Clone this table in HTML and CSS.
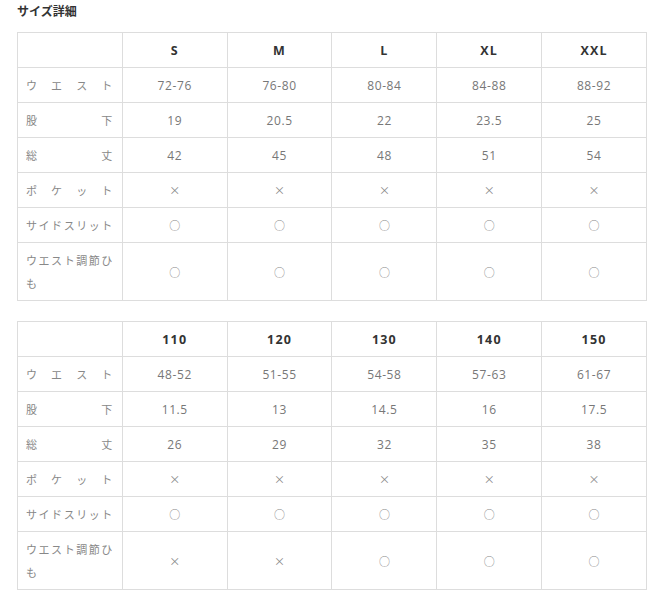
FILE: index.html
```html
<!DOCTYPE html>
<html lang="ja">
<head>
<meta charset="utf-8">
<link rel="stylesheet" href="styles.css">
</head>
<body>
<h2 class="title">サイズ詳細</h2>
<table class="size">
  <colgroup><col><col><col><col><col><col></colgroup>
  <tr class="head"><td></td><th>S</th><th>M</th><th>L</th><th>XL</th><th>XXL</th></tr>
  <tr><td class="lbl">ウ　エ　ス　ト</td><td>72-76</td><td>76-80</td><td>80-84</td><td>84-88</td><td>88-92</td></tr>
  <tr><td class="lbl">股　　下</td><td>19</td><td>20.5</td><td>22</td><td>23.5</td><td>25</td></tr>
  <tr><td class="lbl">総　　丈</td><td>42</td><td>45</td><td>48</td><td>51</td><td>54</td></tr>
  <tr><td class="lbl">ポ　ケ　ッ　ト</td><td class="sym">×</td><td class="sym">×</td><td class="sym">×</td><td class="sym">×</td><td class="sym">×</td></tr>
  <tr><td class="lbl">サイドスリット</td><td class="sym">○</td><td class="sym">○</td><td class="sym">○</td><td class="sym">○</td><td class="sym">○</td></tr>
  <tr><td class="lbl">ウエスト調節ひも</td><td class="sym">○</td><td class="sym">○</td><td class="sym">○</td><td class="sym">○</td><td class="sym">○</td></tr>
</table>
<table class="size second">
  <colgroup><col><col><col><col><col><col></colgroup>
  <tr class="head"><td></td><th>110</th><th>120</th><th>130</th><th>140</th><th>150</th></tr>
  <tr><td class="lbl">ウ　エ　ス　ト</td><td>48-52</td><td>51-55</td><td>54-58</td><td>57-63</td><td>61-67</td></tr>
  <tr><td class="lbl">股　　下</td><td>11.5</td><td>13</td><td>14.5</td><td>16</td><td>17.5</td></tr>
  <tr><td class="lbl">総　　丈</td><td>26</td><td>29</td><td>32</td><td>35</td><td>38</td></tr>
  <tr><td class="lbl">ポ　ケ　ッ　ト</td><td class="sym">×</td><td class="sym">×</td><td class="sym">×</td><td class="sym">×</td><td class="sym">×</td></tr>
  <tr><td class="lbl">サイドスリット</td><td class="sym">○</td><td class="sym">○</td><td class="sym">○</td><td class="sym">○</td><td class="sym">○</td></tr>
  <tr><td class="lbl">ウエスト調節ひも</td><td class="sym">×</td><td class="sym">×</td><td class="sym">○</td><td class="sym">○</td><td class="sym">○</td></tr>
</table>
</body>
</html>
```

FILE: styles.css
```css
html, body {
  margin: 0;
  padding: 0;
  background: #fff;
}
body {
  padding: 0 13px 0 17px;
  font-family: "Open Sans", "Noto Sans CJK JP", sans-serif;
  color: #777;
}
.title {
  margin: 3px 0 13px;
  font-size: 12px;
  line-height: 16px;
  font-weight: bold;
  color: #333;
  font-family: "Noto Sans CJK JP", sans-serif;
}
.size {
  width: 630px;
  table-layout: fixed;
  border-collapse: collapse;
}
.size.second {
  margin-top: 20px;
}
.size td, .size th {
  border: 1px solid #ddd;
  padding: 6px 8px 5px;
  line-height: 23px;
  text-align: center;
  font-size: 12px;
  letter-spacing: 0.6px;
  font-weight: normal;
  color: #777;
}
.size th {
  font-weight: bold;
  font-size: 12.5px;
  letter-spacing: 1.2px;
  color: #333;
}
.size td.lbl {
  font-family: "Noto Sans CJK JP", sans-serif;
  font-size: 11px;
  letter-spacing: 1.5px;
  color: #888;
  text-align: justify;
  text-align-last: justify;
  word-break: break-all;
}
.size td.sym {
  font-family: "Noto Sans CJK JP", sans-serif;
  font-size: 11px;
  color: #888;
  letter-spacing: 0;
}
```
